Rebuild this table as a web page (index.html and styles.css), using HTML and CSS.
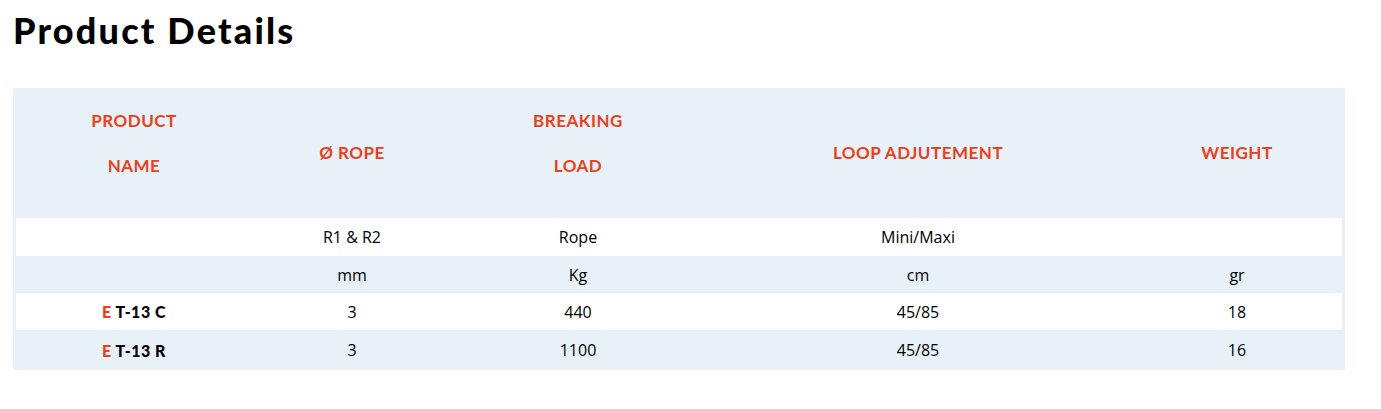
FILE: index.html
```html
<!DOCTYPE html>
<html lang="en">
<head>
<meta charset="utf-8">
<title>Product Details</title>
<link rel="stylesheet" href="styles.css">
</head>
<body>
<h1 class="title">Product Details</h1>
<div class="table-wrap">
<table class="specs">
  <colgroup>
    <col class="c1"><col class="c2"><col class="c3"><col class="c4"><col class="c5">
  </colgroup>
  <thead>
    <tr class="head">
      <th class="two"><span class="line">PRODUCT</span><span class="line">NAME</span></th>
      <th class="one">Ø ROPE</th>
      <th class="two"><span class="line">BREAKING</span><span class="line">LOAD</span></th>
      <th class="one">LOOP ADJUTEMENT</th>
      <th class="one">WEIGHT</th>
    </tr>
  </thead>
  <tbody>
    <tr class="white"><td></td><td>R1 &amp; R2</td><td>Rope</td><td>Mini/Maxi</td><td></td></tr>
    <tr class="blue"><td></td><td>mm</td><td>Kg</td><td>cm</td><td>gr</td></tr>
    <tr class="white"><td class="name"><span class="e">E</span> T-13 C</td><td>3</td><td>440</td><td>45/85</td><td>18</td></tr>
    <tr class="blue"><td class="name"><span class="e">E</span> T-13 R</td><td>3</td><td>1100</td><td>45/85</td><td>16</td></tr>
  </tbody>
</table>
</div>
</body>
</html>
```
FILE: styles.css
```css
body {
  margin: 0;
  background: #ffffff;
  font-family: "Open Sans", "Liberation Sans", sans-serif;
  color: #000;
}
.title {
  margin: 0;
  padding: 9px 0 0 13px;
  font-family: Lato, "Liberation Sans", sans-serif;
  font-weight: 900;
  font-size: 36px;
  line-height: 42px;
  letter-spacing: 2.2px;
}
.table-wrap {
  margin: 37px 0 0 13px;
  width: 1332px;
  background: #e8f0f8;
  padding: 0 3px 0 3px;
  box-sizing: border-box;
}
.specs {
  width: 100%;
  border-collapse: collapse;
  table-layout: fixed;
}
.c1 { width: 236px; }
.c2 { width: 200px; }
.c3 { width: 252px; }
.c4 { width: 428px; }
.c5 { width: 210px; }
.head { height: 130px; }
.head th {
  padding: 0;
  color: #e8411c;
  font-family: Lato, "Liberation Sans", sans-serif;
  font-weight: 700;
  font-size: 17px;
  letter-spacing: 0.5px;
  vertical-align: top;
  text-align: center;
}
.head th.two { padding-top: 10px; }
.head th.one { padding-top: 42px; line-height: 45px; }
.line { display: block; line-height: 45px; }
.specs td {
  text-align: center;
  font-size: 16px;
  height: 37px;
  padding: 0;
  vertical-align: middle;
}
.white { background: #ffffff; }
.blue { background: #e8f0f8; }
.specs tbody tr:first-child td { height: 38px; }
.specs tbody tr:last-child td { height: 40px; }
.specs td.name {
  font-family: Lato, "Liberation Sans", sans-serif;
  font-weight: 900;
  font-size: 16px;
  letter-spacing: 0.5px;
}
.e { color: #e8411c; }
```
